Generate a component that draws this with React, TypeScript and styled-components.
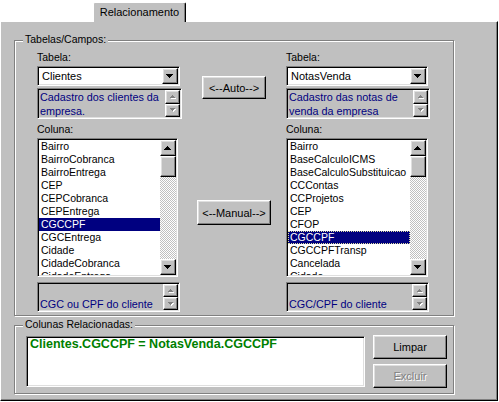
import { FC } from "react";
import styled, { createGlobalStyle, css } from "styled-components";

const GlobalStyle = createGlobalStyle`
  * { box-sizing: border-box; }
  body {
    margin: 0;
    background: #fff;
    font-family: "Liberation Sans", Arial, sans-serif;
    font-size: 10.5px;
    color: #000;
  }
`;

const raised = css`
  background: #c0c0c0;
  border: 1px solid;
  border-color: #fff #000 #000 #fff;
  box-shadow: inset -1px -1px 0 #808080, inset 1px 1px 0 #dfdfdf;
`;

const sunken = css`
  border: 1px solid;
  border-color: #808080 #fff #fff #808080;
  padding: 1px;
  box-shadow: inset 1px 1px 0 #000, inset -1px -1px 0 #dfdfdf;
`;

const Screen = styled.div`
  width: 498px;
`;

const TabRow = styled.div`
  height: 21px;
  padding-left: 93px;
  display: flex;
  align-items: flex-end;
`;

const Tab = styled.div`
  position: relative;
  z-index: 1;
  width: 93px;
  height: 20px;
  margin-bottom: -1px;
  padding-bottom: 2px;
  background: #c0c0c0;
  border: 1px solid #fff;
  border-bottom: none;
  border-right-color: #000;
  border-top-left-radius: 2px;
  border-top-right-radius: 2px;
  box-shadow: inset -1px 0 0 #808080;
  font-size: 11px;
  display: flex;
  align-items: center;
  justify-content: center;
`;

const Page = styled.div`
  height: 380px;
  background: #c0c0c0;
  border: 1px solid;
  border-color: #fff #000 #000 #fff;
  box-shadow: inset -1px -1px 0 #808080;
  padding: 18px 0 0 13px;
`;

const GroupBox = styled.div<{ $h: number; $gap?: number }>`
  position: relative;
  width: 440px;
  height: ${(p) => p.$h}px;
  margin-top: ${(p) => p.$gap ?? 0}px;
  border: 1px solid #808080;
  box-shadow: inset 1px 1px 0 #fff, 1px 1px 0 #fff;
`;

const Caption = styled.span`
  position: absolute;
  top: -8px;
  left: 8px;
  padding: 0 2px;
  background: #c0c0c0;
  line-height: 13px;
`;

const TablesGrid = styled.div`
  display: grid;
  grid-template-columns: 145px 104px 144px;
  padding: 10px 0 0 22px;
`;

const Column = styled.div`
  display: flex;
  flex-direction: column;
`;

const Label = styled.div<{ $gap?: number }>`
  height: 13px;
  line-height: 13px;
  margin-top: ${(p) => p.$gap ?? 0}px;
  margin-bottom: 2px;
`;

const Combo = styled.div<{ $w: number }>`
  ${sunken};
  width: ${(p) => p.$w}px;
  height: 20px;
  background: #fff;
  display: flex;
`;

const ComboText = styled.div`
  flex: 1;
  padding-left: 3px;
  line-height: 16px;
  font-size: 11px;
`;

const DropButton = styled.div`
  ${raised};
  width: 16px;
  height: 16px;
  display: flex;
  align-items: center;
  justify-content: center;
`;

const Memo = styled.div<{ $w: number; $h: number; $gap: number }>`
  ${sunken};
  width: ${(p) => p.$w}px;
  height: ${(p) => p.$h}px;
  margin-top: ${(p) => p.$gap}px;
  background: #c0c0c0;
  display: flex;
`;

const MemoText = styled.div<{ $pad: number }>`
  flex: 1;
  color: #000080;
  padding: ${(p) => p.$pad}px 1px 0 1px;
  line-height: 13.5px;
  font-size: 10.8px;
  overflow: hidden;
`;

const MemoScroll = styled.div`
  width: 15px;
  display: flex;
  flex-direction: column;
`;

const MemoButton = styled.div`
  ${raised};
  flex: 1;
  display: flex;
  align-items: center;
  justify-content: center;
`;

const ListBox = styled.div<{ $w: number }>`
  ${sunken};
  width: ${(p) => p.$w}px;
  height: 139px;
  background: #fff;
  display: flex;
`;

const Items = styled.div`
  flex: 1;
  overflow: hidden;
`;

const Item = styled.div<{ $selected?: boolean; $focus?: boolean }>`
  height: 13px;
  line-height: 13px;
  padding-left: 2px;
  white-space: nowrap;
  background: ${(p) => (p.$selected ? "#000080" : "transparent")};
  color: ${(p) => (p.$selected ? "#fff" : "#000")};
  outline: ${(p) => (p.$focus ? "1px dotted #e0e0a0" : "none")};
  outline-offset: -1px;
`;

const ScrollBar = styled.div`
  width: 16px;
  display: flex;
  flex-direction: column;
`;

const ScrollButton = styled.div`
  ${raised};
  height: 16px;
  display: flex;
  align-items: center;
  justify-content: center;
`;

const Thumb = styled.div`
  ${raised};
  height: 21px;
`;

const Track = styled.div`
  flex: 1;
  background: repeating-conic-gradient(#c0c0c0 0 25%, #fff 0 50%) 0 0 / 2px 2px;
`;

const Middle = styled.div`
  display: flex;
  flex-direction: column;
  align-items: center;
`;

const Button = styled.button<{ $w: number; $h: number; $gap?: number }>`
  ${raised};
  width: ${(p) => p.$w}px;
  height: ${(p) => p.$h}px;
  margin-top: ${(p) => p.$gap ?? 0}px;
  padding: 0;
  font-family: inherit;
  font-size: 11px;
  color: #000;
  &:disabled {
    color: #808080;
    text-shadow: 1px 1px 0 #fff;
  }
`;

const RelatedRow = styled.div`
  display: flex;
  padding: 10px 0 0 11px;
`;

const RelatedMemo = styled.div`
  ${sunken};
  width: 339px;
  height: 51px;
  background: #fff;
  color: #008000;
  font-weight: bold;
  font-size: 12.5px;
  line-height: 13px;
  padding: 1px 3px;
`;

const ActionColumn = styled.div`
  display: flex;
  flex-direction: column;
  gap: 5px;
  margin: -1px 0 0 8px;
`;

const Arrow: FC<{ up?: boolean; disabled?: boolean; small?: boolean }> = ({ up, disabled, small }) => {
  const w = small ? 5 : 7;
  const h = small ? 3 : 4;
  const pts = up ? `0,${h} ${w},${h} ${w / 2},0` : `0,0 ${w},0 ${w / 2},${h}`;
  return (
    <svg width={w + 1} height={h + 1} shapeRendering="crispEdges">
      {disabled && <polygon points={pts} fill="#fff" transform="translate(1,1)" />}
      <polygon points={pts} fill={disabled ? "#808080" : "#000"} />
    </svg>
  );
};

const DescMemo: FC<{ w: number; h: number; gap: number; pad: number; lines: string[] }> = ({
  w,
  h,
  gap,
  pad,
  lines,
}) => (
  <Memo $w={w} $h={h} $gap={gap}>
    <MemoText $pad={pad}>
      {lines.map((l, i) => (
        <div key={i}>{l || "\u00a0"}</div>
      ))}
    </MemoText>
    <MemoScroll>
      <MemoButton>
        <Arrow up disabled small />
      </MemoButton>
      <MemoButton>
        <Arrow disabled small />
      </MemoButton>
    </MemoScroll>
  </Memo>
);

const FieldList: FC<{ w: number; items: string[]; selected: number; focus?: boolean }> = ({
  w,
  items,
  selected,
  focus,
}) => (
  <ListBox $w={w}>
    <Items>
      {items.map((it, i) => (
        <Item key={it} $selected={i === selected} $focus={focus && i === selected}>
          {it}
        </Item>
      ))}
    </Items>
    <ScrollBar>
      <ScrollButton>
        <Arrow up />
      </ScrollButton>
      <Thumb />
      <Track />
      <ScrollButton>
        <Arrow />
      </ScrollButton>
    </ScrollBar>
  </ListBox>
);

const leftFields = [
  "Bairro",
  "BairroCobranca",
  "BairroEntrega",
  "CEP",
  "CEPCobranca",
  "CEPEntrega",
  "CGCCPF",
  "CGCEntrega",
  "Cidade",
  "CidadeCobranca",
  "CidadeEntrega",
];

const rightFields = [
  "Bairro",
  "BaseCalculoICMS",
  "BaseCalculoSubstituicao",
  "CCContas",
  "CCProjetos",
  "CEP",
  "CFOP",
  "CGCCPF",
  "CGCCPFTransp",
  "Cancelada",
  "Cidade",
];

const App: FC = () => {
  return (
    <Screen>
      <GlobalStyle />
      <TabRow>
        <Tab>Relacionamento</Tab>
      </TabRow>
      <Page>
        <GroupBox $h={276}>
          <Caption>Tabelas/Campos:</Caption>
          <TablesGrid>
            <Column>
              <Label>Tabela:</Label>
              <Combo $w={143}>
                <ComboText>Clientes</ComboText>
                <DropButton>
                  <Arrow />
                </DropButton>
              </Combo>
              <DescMemo w={145} h={31} gap={2} pad={1} lines={["Cadastro dos clientes da", "empresa."]} />
              <Label $gap={4}>Coluna:</Label>
              <FieldList w={141} items={leftFields} selected={6} />
              <DescMemo w={143} h={30} gap={5} pad={0} lines={["", "CGC ou CPF do cliente"]} />
            </Column>
            <Middle>
              <Button $w={64} $h={23} $gap={25}>
                &lt;--Auto--&gt;
              </Button>
              <Button $w={74} $h={25} $gap={101}>
                &lt;--Manual--&gt;
              </Button>
            </Middle>
            <Column>
              <Label>Tabela:</Label>
              <Combo $w={142}>
                <ComboText>NotasVenda</ComboText>
                <DropButton>
                  <Arrow />
                </DropButton>
              </Combo>
              <DescMemo w={144} h={31} gap={2} pad={1} lines={["Cadastro das notas de", "venda da empresa"]} />
              <Label $gap={4}>Coluna:</Label>
              <FieldList w={142} items={rightFields} selected={7} focus />
              <DescMemo w={143} h={30} gap={5} pad={0} lines={["", "CGC/CPF do cliente"]} />
            </Column>
          </TablesGrid>
        </GroupBox>
        <GroupBox $h={69} $gap={9}>
          <Caption>Colunas Relacionadas:</Caption>
          <RelatedRow>
            <RelatedMemo>Clientes.CGCCPF = NotasVenda.CGCCPF</RelatedMemo>
            <ActionColumn>
              <Button $w={74} $h={24}>
                Limpar
              </Button>
              <Button $w={74} $h={24} disabled>
                Excluir
              </Button>
            </ActionColumn>
          </RelatedRow>
        </GroupBox>
      </Page>
    </Screen>
  );
};

export default App;
